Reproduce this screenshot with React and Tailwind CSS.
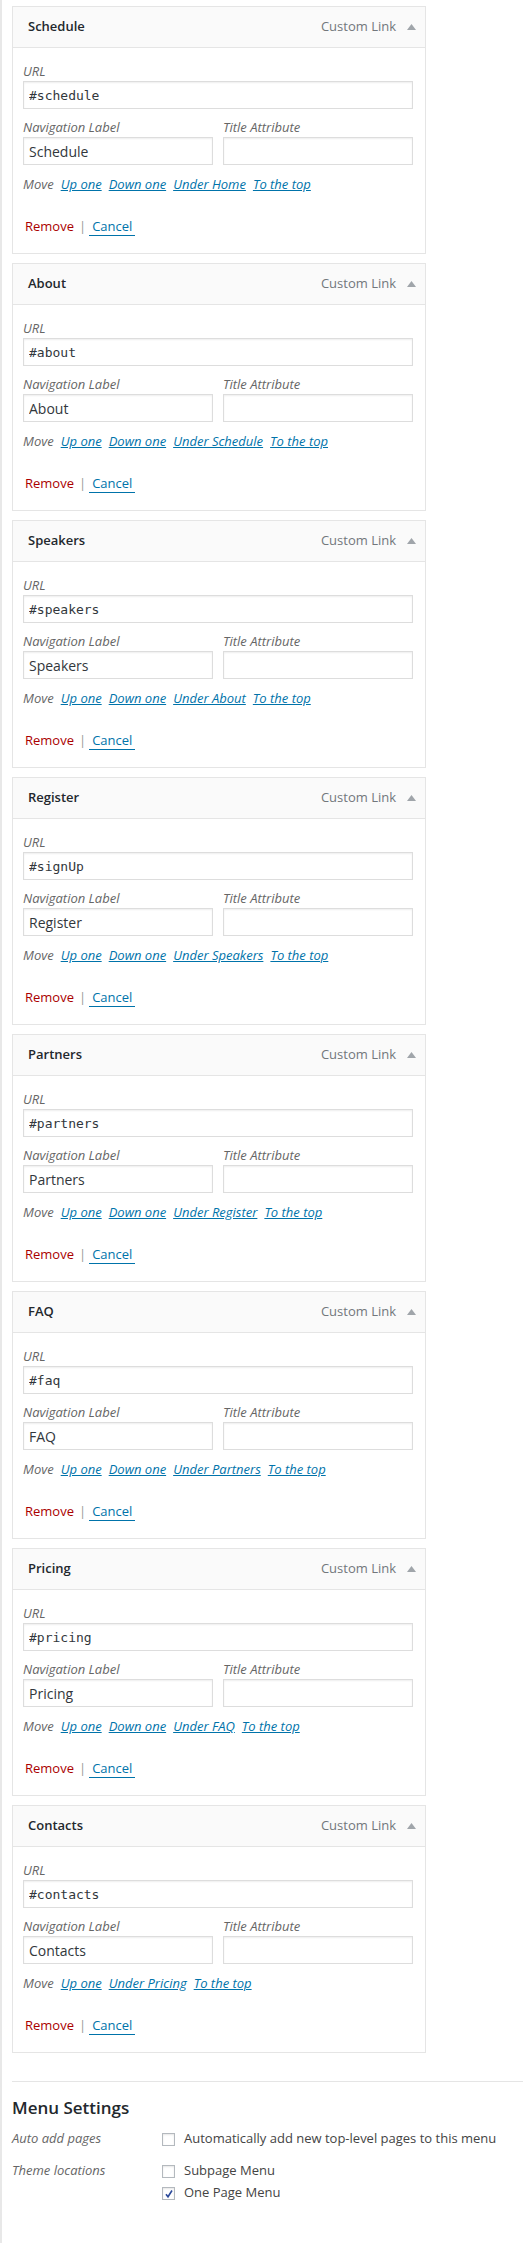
import React from 'react';

const menuItems = [
  { title: 'Schedule', url: '#schedule', moves: ['Up one', 'Down one', 'Under Home', 'To the top'] },
  { title: 'About', url: '#about', moves: ['Up one', 'Down one', 'Under Schedule', 'To the top'] },
  { title: 'Speakers', url: '#speakers', moves: ['Up one', 'Down one', 'Under About', 'To the top'] },
  { title: 'Register', url: '#signUp', moves: ['Up one', 'Down one', 'Under Speakers', 'To the top'] },
  { title: 'Partners', url: '#partners', moves: ['Up one', 'Down one', 'Under Register', 'To the top'] },
  { title: 'FAQ', url: '#faq', moves: ['Up one', 'Down one', 'Under Partners', 'To the top'] },
  { title: 'Pricing', url: '#pricing', moves: ['Up one', 'Down one', 'Under FAQ', 'To the top'] },
  { title: 'Contacts', url: '#contacts', moves: ['Up one', 'Under Pricing', 'To the top'] },
];

const inputCls =
  'block h-[28px] border border-[#ddd] bg-white shadow-[inset_0_1px_2px_rgba(0,0,0,0.07)] px-[5px] text-[#32373c] outline-none';

const MenuItemCard = ({ item }) => (
  <div className="ml-[10px] mb-[9px] w-[414px] border border-[#e5e5e5] bg-white">
    {/* header */}
    <div className="flex h-[41px] items-center justify-between border-b border-[#e5e5e5] bg-[#fafafa] pl-[15px] pr-[9px]">
      <span className="text-[13px] font-semibold text-[#23282d]">{item.title}</span>
      <div className="flex items-center">
        <span className="text-[13px] text-[#72777c]">Custom Link</span>
        <svg className="ml-[11px]" width="9" height="6" viewBox="0 0 9 6">
          <path d="M4.5 0 L9 6 L0 6 Z" fill="#a0a5aa" />
        </svg>
      </div>
    </div>

    {/* settings */}
    <div className="pl-[10px] pt-[14px] pb-[17px] text-[13px] leading-[19px]">
      <label className="block italic text-[#666]">URL</label>
      <input
        readOnly
        value={item.url}
        className={`${inputCls} w-[390px] text-[13px] font-['DejaVu_Sans_Mono',monospace]`}
      />
      <div className="mt-[9px] flex gap-[10px]">
        <div>
          <label className="block italic text-[#666]">Navigation Label</label>
          <input readOnly value={item.title} className={`${inputCls} w-[190px] text-[14px]`} />
        </div>
        <div>
          <label className="block italic text-[#666]">Title Attribute</label>
          <input readOnly value="" className={`${inputCls} w-[190px] text-[14px]`} />
        </div>
      </div>
      <div className="mt-[10px] flex gap-[7px] italic">
        <span className="text-[#666]">Move</span>
        {item.moves.map((m) => (
          <a key={m} href="#" className="text-[#0073aa] underline">
            {m}
          </a>
        ))}
      </div>
      <div className="mt-[23px] flex items-center">
        <a href="#" className="px-[2px] text-[#a00]">Remove</a>
        <span className="mx-[3px] text-[#999]">|</span>
        <a href="#" className="border-b border-[#0073aa] px-[3px] leading-[17px] text-[#0073aa]">Cancel</a>
      </div>
    </div>
  </div>
);

const Checkbox = ({ checked }) => (
  <span className="mt-[4px] flex h-[13px] w-[13px] shrink-0 items-center justify-center border border-[#b4b9be] bg-white shadow-[inset_0_1px_2px_rgba(0,0,0,0.1)]">
    {checked && (
      <svg width="10" height="10" viewBox="0 0 10 10">
        <path d="M2 5.2 L4 7.8 L8 1.5" fill="none" stroke="#2d4b9a" strokeWidth="1.6" />
      </svg>
    )}
  </span>
);

export default function App() {
  return (
    <div className="min-h-[2243px] border-l-2 border-[#e8e8e8] bg-white pt-[6px] font-['Open_Sans',sans-serif] text-[13px] text-[#444]">
      {menuItems.map((item) => (
        <MenuItemCard key={item.title} item={item} />
      ))}

      {/* card mb collapses into this margin */}
      <div className="ml-[10px] mt-[28px] border-t border-[#e5e5e5] pt-[14px]">
        <h3 className="text-[17px] font-semibold leading-[24px] text-[#23282d]">Menu Settings</h3>

        <div className="mt-[9px] flex leading-[19px]">
          <span className="w-[150px] italic text-[#666]">Auto add pages</span>
          <div className="flex items-start gap-[9px]">
            <Checkbox />
            <span className="text-[#444]">Automatically add new top-level pages to this menu</span>
          </div>
        </div>

        <div className="mt-[13px] flex leading-[19px]">
          <span className="w-[150px] italic text-[#666]">Theme locations</span>
          <div className="flex flex-col gap-[3px]">
            <div className="flex items-start gap-[9px]">
              <Checkbox />
              <span>Subpage Menu</span>
            </div>
            <div className="flex items-start gap-[9px]">
              <Checkbox checked />
              <span>One Page Menu</span>
            </div>
          </div>
        </div>
      </div>
    </div>
  );
}
